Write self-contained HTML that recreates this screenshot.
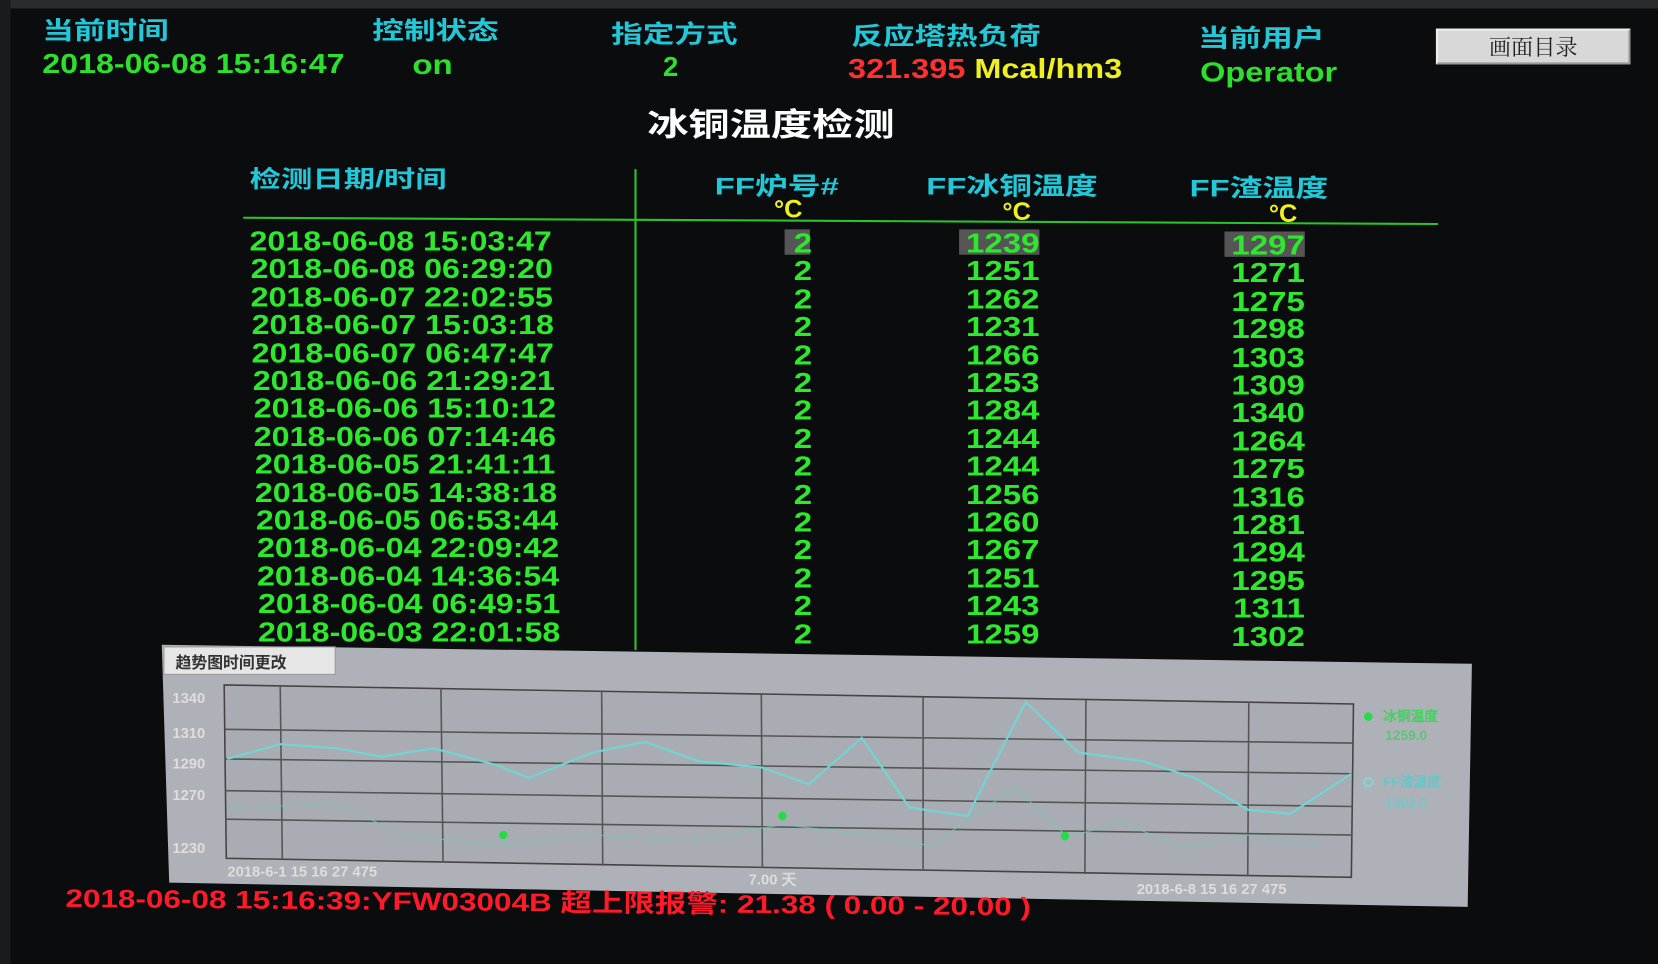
<!DOCTYPE html>
<html><head><meta charset="utf-8"><style>
html,body{margin:0;padding:0;background:#0a0b0c;overflow:hidden}
#wrap{position:absolute;left:0;top:0;width:1568px;height:912px;transform:scale(1.05740,1.05702);transform-origin:0 0;background:#0b0c0d;font-family:"Liberation Sans","Noto Sans CJK SC",sans-serif;font-weight:bold}
.a{position:absolute;white-space:nowrap;line-height:1;transform-origin:0 0}
.c{color:#22c8d8}
.g{color:#2ee02e}
.d{font-size:26px;color:#2ee82e;transform:scaleX(1.17)}
.n{font-size:26px;color:#2ee82e;text-align:right;width:80px;transform:scaleX(1.2);transform-origin:100% 0}
</style></head><body><div id="wrap">
<div class="a" style="left:0;top:0;width:1568px;height:8px;background:#2a2b2d"></div>
<div class="a" style="left:0;top:0;width:10px;height:912px;background:#1a1b1c"></div>
<div class="a c" style="left:40px;top:18px;font-size:23px;transform:scaleX(1.3)">当前时间</div>
<div class="a g" style="left:40px;top:47px;font-size:26px;transform:scaleX(1.17)">2018-06-08 15:16:47</div>
<div class="a c" style="left:352px;top:18px;font-size:23px;transform:scaleX(1.3)">控制状态</div>
<div class="a g" style="left:390px;top:48px;font-size:26px;transform:scaleX(1.2)">on</div>
<div class="a c" style="left:578px;top:21px;font-size:23px;transform:scaleX(1.3)">指定方式</div>
<div class="a g" style="left:627px;top:50px;font-size:26px">2</div>
<div class="a c" style="left:805px;top:23px;font-size:23px;transform:scaleX(1.3)">反应塔热负荷</div>
<div class="a" style="left:802px;top:52px;font-size:26px;color:#ff3030;transform:scaleX(1.18)">321.395 <span style="color:#f0f020">Mcal/hm3</span></div>
<div class="a c" style="left:1133px;top:25px;font-size:23px;transform:scaleX(1.3)">当前用户</div>
<div class="a g" style="left:1135px;top:55px;font-size:26px;transform:scaleX(1.18)">Operator</div>
<div class="a" style="left:1358px;top:27px;width:180px;height:30px;background:#d8d8d8;border:2px outset #eee;color:#222;font-weight:normal;font-size:21px;text-align:center;line-height:30px;font-family:'Noto Serif CJK SC',serif">画面目录</div>
<div class="a" style="left:612px;top:104px;font-size:30px;color:#fff;transform:scaleX(1.3)">冰铜温度检测</div>
<div class="a c" style="left:236px;top:159px;font-size:22px;transform:scaleX(1.35)">检测日期/时间</div>
<div class="a c" style="left:676px;top:165px;font-size:23px;transform:scaleX(1.35)">FF炉号#</div>
<div class="a" style="left:732px;top:187px;font-size:24px;color:#f0f020">°C</div>
<div class="a c" style="left:876px;top:165px;font-size:23px;transform:scaleX(1.35)">FF冰铜温度</div>
<div class="a" style="left:948px;top:189px;font-size:24px;color:#f0f020">°C</div>
<div class="a c" style="left:1125px;top:167px;font-size:23px;transform:scaleX(1.35)">FF渣温度</div>
<div class="a" style="left:1200px;top:191px;font-size:24px;color:#f0f020">°C</div>
<div class="a" style="left:230px;top:205px;width:1130px;height:2px;background:#2ec02e;transform:rotate(0.3deg)"></div>
<div class="a" style="left:600px;top:160px;width:2px;height:455px;background:#2ec02e"></div>
<div class="a" style="left:742px;top:217px;width:24px;height:24px;background:#555"></div>
<div class="a" style="left:907px;top:217px;width:76px;height:24px;background:#555"></div>
<div class="a" style="left:1158px;top:219px;width:76px;height:24px;background:#555"></div>
<div id="rows"></div>
<svg class="a" style="left:0;top:0" width="1568" height="912">
<polygon points="153,610 1392,628 1388,858 160,835" fill="#aeb1b8"/>
<rect x="155" y="612" width="162" height="26" fill="#e6e6e6" stroke="#999"/>
<text x="166" y="632" font-size="15" fill="#333" font-family="Noto Sans CJK SC">趋势图时间更改</text>
<polygon points="212,648 1280,666 1278,830 214,812" fill="#a9acb3" stroke="#444" stroke-width="1.5"/>
<g stroke="#555" stroke-width="1.5">
<line x1="265" y1="649" x2="267" y2="813"/><line x1="417" y1="651" x2="419" y2="816"/><line x1="569" y1="654" x2="570" y2="819"/><line x1="720" y1="657" x2="721" y2="821"/><line x1="873" y1="659" x2="873" y2="824"/><line x1="1027" y1="662" x2="1026" y2="827"/><line x1="1181" y1="664" x2="1180" y2="829"/>
<line x1="213" y1="690" x2="1279" y2="703"/><line x1="213" y1="718" x2="1279" y2="732"/><line x1="213" y1="748" x2="1279" y2="763"/><line x1="213" y1="775" x2="1279" y2="790"/>
</g>
<polyline fill="none" stroke="#6fd6d6" stroke-width="2" points="215,718 265,704 320,708 360,716 410,708 470,724 500,736 560,712 610,702 660,720 720,726 765,742 815,698 860,764 915,772 970,664 1020,712 1080,720 1130,736 1180,766 1220,770 1278,732"/>
<polyline fill="none" stroke="#78c8b8" stroke-width="1.2" opacity="0.7" points="215,765 320,760 380,790 470,800 560,790 660,795 740,780 820,790 880,800 960,745 1010,792 1060,778 1120,802 1180,790 1250,800"/>
<circle cx="476" cy="790" r="4" fill="#22dd44"/><circle cx="740" cy="772" r="4" fill="#22dd44"/><circle cx="1007" cy="791" r="4" fill="#22dd44"/><circle cx="1294" cy="678" r="4" fill="#22dd44"/>
<circle cx="1294" cy="740" r="4" fill="none" stroke="#7dd" stroke-width="1.5"/>
<g font-size="13" font-family="Liberation Sans" opacity="0.8"><text x="1308" y="682" fill="#2d4">冰铜温度</text><text x="1310" y="700" fill="#4c6">1259.0</text><text x="1308" y="744" fill="#5cc">FF渣温度</text><text x="1310" y="764" fill="#6cc">1302.0</text></g>
<g font-size="14" fill="#ddd" font-family="Liberation Sans"><text x="163" y="665">1340</text><text x="163" y="698">1310</text><text x="163" y="727">1290</text><text x="163" y="757">1270</text><text x="163" y="807">1230</text>
<text x="215" y="829">2018-6-1 15 16 27 475</text><text x="708" y="837">7.00 天</text><text x="1075" y="846">2018-6-8 15 16 27 475</text></g>
</svg>
<div class="a" style="left:62px;top:839px;font-size:24px;color:#ff1a2a;transform:rotate(0.5deg) scaleX(1.24)">2018-06-08 15:16:39:YFW03004B 超上限报警: 21.38 ( 0.00 - 20.00 )</div>
</div>
<script>
var d=["2018-06-08 15:03:47","2018-06-08 06:29:20","2018-06-07 22:02:55","2018-06-07 15:03:18","2018-06-07 06:47:47","2018-06-06 21:29:21","2018-06-06 15:10:12","2018-06-06 07:14:46","2018-06-05 21:41:11","2018-06-05 14:38:18","2018-06-05 06:53:44","2018-06-04 22:09:42","2018-06-04 14:36:54","2018-06-04 06:49:51","2018-06-03 22:01:58"];
var b=[1239,1251,1262,1231,1266,1253,1284,1244,1244,1256,1260,1267,1251,1243,1259];
var s=[1297,1271,1275,1298,1303,1309,1340,1264,1275,1316,1281,1294,1295,1311,1302];
var h="";
for(var i=0;i<15;i++){var y=215+i*26.4;var x=236+i*0.6;
h+='<div class="a d" style="left:'+x+'px;top:'+y+'px">'+d[i]+'</div>';
h+='<div class="a n" style="left:688px;top:'+(y+2)+'px">2</div>';
h+='<div class="a n" style="left:903px;top:'+(y+2)+'px">'+b[i]+'</div>';
h+='<div class="a n" style="left:1154px;top:'+(y+4)+'px">'+s[i]+'</div>';}
document.getElementById("rows").innerHTML=h;
</script>
</body></html>
